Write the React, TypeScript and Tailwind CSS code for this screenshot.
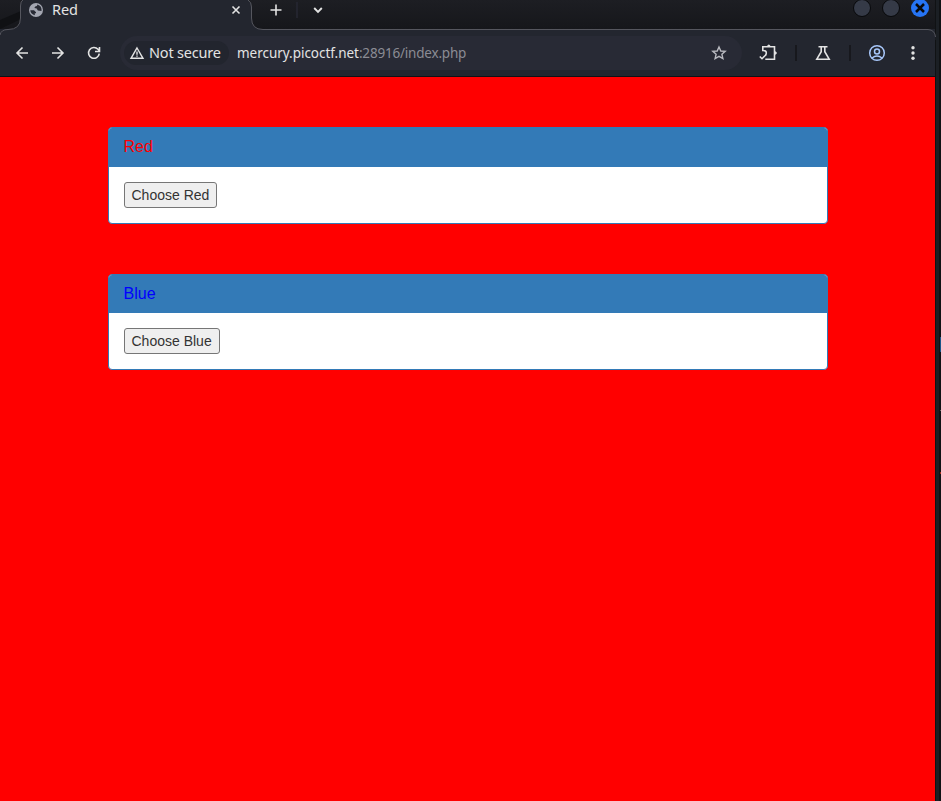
import React from "react";

function Globe() {
  return (
    <svg className="size-[14px] shrink-0" viewBox="0 0 14 14">
      <circle cx="7" cy="7" r="7" fill="#a3a6b1" />
      <path
        d="M1.300 7.300H5L7 9.300v1h-1.200v1.900C3.400 11.800 1.300 9.900 1.300 7.300ZM8.200 1.600c.3 1.600-.8 1.900-2 2L5.400 5l2.300.6 1.100 1.900 3.700.4c.5-2.900-1.100-5.500-4.300-6.300Z"
        fill="#272a34"
      />
    </svg>
  );
}

type IconProps = { className?: string; children: React.ReactNode };
function Icon({ className = "", children }: IconProps) {
  return (
    <svg
      className={"size-5 shrink-0 " + className}
      viewBox="0 0 20 20"
      fill="none"
      stroke="currentColor"
      strokeWidth="1.6"
    >
      {children}
    </svg>
  );
}

function TabStrip() {
  return (
    <div className="relative flex h-[29px] items-start bg-gradient-to-b from-[#1d1e23] to-[#16171b]">
      <svg className="absolute left-0 top-0 h-[40px] w-[936px]" viewBox="0 0 936 40" fill="none">
        <path d="M0 20 21 11v8L0 29Z" fill="#101114" />
        <path
          d="M0 40v-5Q1 29.500 8 29.500 20.500 29.500 20.500 18V6Q20.500 1 24 0H248Q251.500 2 251.500 7V18Q251.500 29.500 263 29.500H928Q935 30 935.500 37V40Z"
          fill="#23262f"
        />
        <path
          d="M0 35Q1 29.500 8 29.500 20.500 29.500 20.500 18V6Q20.500 1 23 0M248 0Q251.500 2 251.500 7V18Q251.500 29.500 263 29.500H928Q935 30 935.500 37"
          stroke="#55565e"
        />
      </svg>
      <div className="relative flex h-5 w-[252px] items-center pl-[29px] pr-[11px] text-[#e3e3e3]">
        <Globe />
        <span className="-mt-[2px] ml-[9px] flex-1 text-[14.5px] leading-5 tracking-[-0.1px]">Red</span>
        <svg className="size-[10px]" viewBox="0 0 10 10" stroke="currentColor" strokeWidth="1.600">
          <path d="m1.500 1.500 7 7m0-7-7 7" />
        </svg>
      </div>
      <div className="relative ml-[14px] flex h-5 items-center text-[#e3e3e3]">
        <Icon>
          <path d="M10 4.500v11M4.500 10h11" />
        </Icon>
        <i className="ml-[10px] mr-[10px] h-4 w-[2px] bg-[#23242e]" />
        <Icon>
          <path d="m6.200 8 3.800 3.800L13.800 8" strokeWidth="1.900" />
        </Icon>
      </div>
      <div className="relative ml-auto mr-[6px] flex h-4 items-center gap-[11px]">
        <i className="size-[18px] rounded-full border border-[#08090b] bg-[#353a47]" />
        <i className="size-[18px] rounded-full border border-[#08090b] bg-[#353a47]" />
        <span className="flex size-[18px] items-center justify-center rounded-full bg-[#2674f4]">
          <svg className="size-[10px]" viewBox="0 0 10 10" stroke="#08090b" strokeWidth="2.500">
            <path d="m1 1 8 8m0-8L1 9" />
          </svg>
        </span>
      </div>
    </div>
  );
}

function Toolbar() {
  return (
    <div className="relative flex h-[48px] items-center border-b border-[#101215] pl-3 pr-3 pt-px text-[#e3e3e3]">
      <Icon>
        <path d="M16 10H5m5.500-5.500L5 10l5.500 5.500" />
      </Icon>
      <Icon className="ml-4">
        <path d="M4 10h11M9.500 4.500 15 10l-5.500 5.500" />
      </Icon>
      <Icon className="ml-4">
        <path d="M15.300 10.700A5.400 5.400 0 1 1 14 6.300l1.300 1.500M15.500 4v4.500H11" />
      </Icon>
      <div className="ml-4 flex h-[34px] w-[623px] items-center rounded-full bg-[#282a35] px-1">
        <div className="flex h-6 w-[105px] items-center rounded-full bg-[#22252e] pl-[5px]">
          <svg className="size-4 shrink-0" viewBox="0 0 16 16" fill="none" stroke="#e3e3e3" strokeWidth="1.400">
            <path d="M8 3 14 13.300H2ZM8 6.500v3.200M8 10.500v1.300" />
          </svg>
          <span className="ml-[4px] whitespace-nowrap text-[14.5px] tracking-[-0.2px]">Not secure</span>
        </div>
        <span className="-mt-px ml-2 flex-1 whitespace-nowrap text-[13.5px] leading-5 tracking-[-0.03px]">
          mercury.picoctf.net
          <span className="tracking-[-0.2px] text-[#8b8c94]">:28916/index.php</span>
        </span>
        <Icon className="mr-[9px] text-[#b9bac0]">
          <path
            d="m10 4 1.800 4 4.400.4-3.300 2.900 1 4.300-3.900-2.300-3.900 2.300 1-4.300-3.300-2.900 4.400-.4Z"
            strokeWidth="1.400"
          />
        </Icon>
      </div>
      <Icon className="ml-[16px]">
        <path d="M4.800 7V3.800h11.700v12.500H7.300M4.800 3.800v3.700q3.500-.2 3.500 2.500 0 1.600-1 2.200" strokeWidth="1.600" />
        <path d="m1.800 13.500 2.200 2.200 4-4" strokeWidth="1.600" />
        <path d="M8.800 3.500q2-4 4 0ZM16.800 8q4.200 2 0 4Z" fill="currentColor" stroke="none" />
      </Icon>
      <i className="ml-[17px] h-4 w-[2px] bg-[#17181d]" />
      <Icon className="ml-4">
        <path d="M5.500 3.700h9M8.200 3.700v5L3.800 16.200h12.400L11.800 8.700v-5" strokeWidth="1.600" />
      </Icon>
      <i className="ml-4 h-4 w-[2px] bg-[#17181d]" />
      <Icon className="ml-4 text-[#a8c7fa]">
        <circle cx="10" cy="10" r="7.300" strokeWidth="1.500" />
        <circle cx="10" cy="8.500" r="2.500" strokeWidth="1.500" />
        <path d="M5 15q5-4 10 0" strokeWidth="1.500" />
      </Icon>
      <Icon className="ml-4">
        <g fill="currentColor" stroke="none">
          <circle cx="10" cy="4.700" r="1.700" />
          <circle cx="10" cy="10" r="1.700" />
          <circle cx="10" cy="15.300" r="1.700" />
        </g>
      </Icon>
    </div>
  );
}

type PanelProps = { name: string; color: string; className: string; button: string };
function Panel({ name, color, className, button }: PanelProps) {
  return (
    <section className={"flex w-[720px] flex-col overflow-hidden rounded-[4px] border border-[#337ab7] bg-white " + className}>
      <h3 className={"flex-1 bg-[#337ab7] px-[15px] pt-[10px] text-[16px] leading-[18px] " + color}>{name}</h3>
      <div className="flex px-[15px] py-[15px]">
        <button
          className={
            "h-[26px] whitespace-nowrap rounded-[3px] border border-[#767676] bg-[#efefef] pl-[7px] text-left text-[14px] leading-5 text-[#333] " +
            button
          }
        >
          Choose {name}
        </button>
      </div>
    </section>
  );
}

export default function App() {
  return (
    <div className="flex h-[801px] w-[941px] overflow-hidden bg-[#15181c]">
      <div className="flex w-[935px] flex-col bg-[#23262f] font-['Noto_Sans',sans-serif]">
        <TabStrip />
        <Toolbar />
        <main className="flex flex-1 flex-col bg-[#ff0000] pl-[107.5px] pt-[50px] font-['Liberation_Sans',Arial,sans-serif]">
          <Panel name="Red" color="text-[#ff0000]" className="h-[97px]" button="w-[93px]" />
          <Panel name="Blue" color="text-[#0000ff]" className="mt-[50px] h-[96px]" button="w-[96px]" />
        </main>
      </div>
      <div className="w-[5px] border-x border-[#101214] bg-[#1b1f24]" />
      <div className="flex w-px flex-col bg-[#101214]">
        <i className="mt-[337px] h-[15px] bg-[#1c5587]" />
        <i className="mt-[58px] h-px bg-[#666]" />
        <i className="mt-[61px] h-[2px] bg-[#9b2c1c]" />
      </div>
    </div>
  );
}
